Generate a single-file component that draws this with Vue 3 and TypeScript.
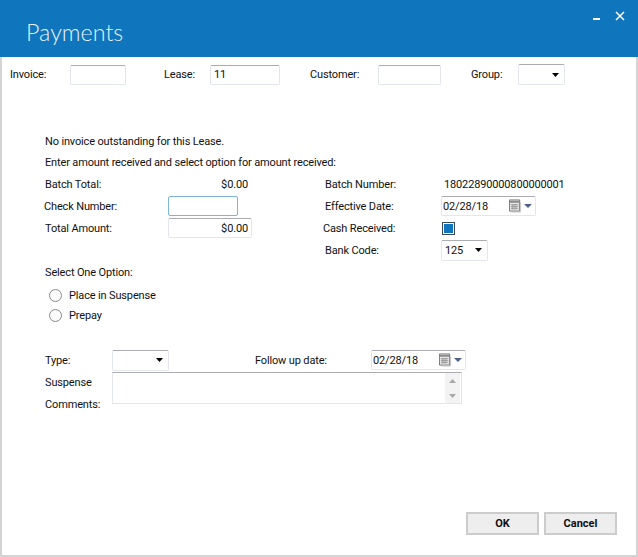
<script setup lang="ts">
import { ref } from 'vue'

const invoice = ref('')
const lease = ref('11')
const customer = ref('')
const checkNumber = ref('')
const totalAmount = ref('$0.00')
const effectiveDate = ref('02/28/18')
const followUpDate = ref('02/28/18')
const comments = ref('')
const option = ref('')
const cashReceived = ref(true)
</script>

<template>
  <div class="window">
    <header class="header">
      <h1 class="title">Payments</h1>
      <div class="window-buttons">
        <span class="minimize" />
        <svg width="10" height="10" viewBox="0 0 10 10">
          <path d="M1 1 9 9M9 1 1 9" stroke="#fff" stroke-width="1.5" fill="none" />
        </svg>
      </div>
    </header>

    <main class="body">
      <div class="search-bar">
        <label class="lbl w-invoice">Invoice:</label>
        <input v-model="invoice" class="field w56" />
        <label class="lbl w-lease">Lease:</label>
        <input v-model="lease" class="field w70" />
        <label class="lbl w-customer">Customer:</label>
        <input v-model="customer" class="field w63" />
        <label class="lbl w-group">Group:</label>
        <div class="field combo w47">
          <span />
          <svg class="caret" width="7" height="4" viewBox="0 0 7 4"><path d="M0 0h7L3.5 4z" fill="#000" /></svg>
        </div>
      </div>

      <p class="message first">No invoice outstanding for this Lease.</p>
      <p class="message">Enter amount received and select option for amount received:</p>

      <div class="form-grid">
        <span>Batch Total:</span>
        <span class="amount">$0.00</span>
        <span class="right-label">Batch Number:</span>
        <span class="batch-no">18022890000800000001</span>

        <span class="nudge">Check Number:</span>
        <input v-model="checkNumber" class="field focused w70" />
        <span class="right-label">Effective Date:</span>
        <div class="field date">
          <input v-model="effectiveDate" class="date-input" />
          <svg width="13" height="14" viewBox="0 0 14 14">
            <path d="M.5 .5h11v12H.5z" fill="#e8e8e8" stroke="#6f6f6f" />
            <path d="M1 2.500h10" stroke="#8a8a8a" stroke-width="2" />
            <path d="M2 5.500h8M2 7.500h8M2 9.500h8M3.500 5v6M5.500 5v6M7.500 5v6" stroke="#8f8f8f" stroke-width=".8" />
            <path d="M12.500 3v10.500H3" stroke="#c4c4c4" fill="none" />
          </svg>
          <svg class="date-caret" width="8" height="4" viewBox="0 0 8 4"><path d="M0 0h8L4 4z" fill="#4d6185" /></svg>
        </div>

        <span>Total Amount:</span>
        <input v-model="totalAmount" class="field total" />
        <span class="right-label nudge">Cash Received:</span>
        <label class="check">
          <input v-model="cashReceived" type="checkbox" />
          <span class="check-box" />
        </label>

        <span class="empty-cell" />
        <span class="right-label">Bank Code:</span>
        <div class="field combo w47">
          <span>125</span>
          <svg class="caret" width="7" height="4" viewBox="0 0 7 4"><path d="M0 0h7L3.5 4z" fill="#000" /></svg>
        </div>
      </div>

      <div class="option-title">Select One Option:</div>
      <label class="radio">
        <input v-model="option" type="radio" value="suspense" />
        <span class="radio-dot" />
        Place in Suspense
      </label>
      <label class="radio">
        <input v-model="option" type="radio" value="prepay" />
        <span class="radio-dot" />
        Prepay
      </label>

      <div class="type-row">
        <span class="type-label">Type:</span>
        <div class="field combo type-combo">
          <span />
          <svg class="caret" width="7" height="4" viewBox="0 0 7 4"><path d="M0 0h7L3.5 4z" fill="#000" /></svg>
        </div>
        <span class="follow-label">Follow up date:</span>
        <div class="field date">
          <input v-model="followUpDate" class="date-input" />
          <svg width="13" height="14" viewBox="0 0 14 14">
            <path d="M.5 .5h11v12H.5z" fill="#e8e8e8" stroke="#6f6f6f" />
            <path d="M1 2.500h10" stroke="#8a8a8a" stroke-width="2" />
            <path d="M2 5.500h8M2 7.500h8M2 9.500h8M3.500 5v6M5.500 5v6M7.500 5v6" stroke="#8f8f8f" stroke-width=".8" />
            <path d="M12.500 3v10.500H3" stroke="#c4c4c4" fill="none" />
          </svg>
          <svg class="date-caret" width="8" height="4" viewBox="0 0 8 4"><path d="M0 0h8L4 4z" fill="#4d6185" /></svg>
        </div>
      </div>

      <div class="comments-row">
        <div class="comments-labels">
          <span>Suspense</span>
          <span>Comments:</span>
        </div>
        <div class="comments-box">
          <textarea v-model="comments" class="comments-input" />
          <div class="scroll">
            <svg width="7" height="4" viewBox="0 0 7 4"><path d="M0 4 3.500 0 7 4z" fill="#a9a9a9" /></svg>
            <svg width="7" height="4" viewBox="0 0 7 4"><path d="M0 0 3.500 4 7 0z" fill="#a9a9a9" /></svg>
          </div>
        </div>
      </div>

      <footer class="actions">
        <button class="btn" type="button">OK</button>
        <button class="btn" type="button">Cancel</button>
      </footer>
    </main>
  </div>
</template>

<style>
html, body {
  margin: 0;
  background: #fff;
}
</style>

<style scoped>
.window {
  width: 638px;
  height: 557px;
  display: flex;
  flex-direction: column;
  font-family: "Roboto", "Liberation Sans", sans-serif;
  font-size: 11px;
  letter-spacing: -0.15px;
  color: #111;
}
.header {
  height: 57px;
  flex: none;
  background: #0f75bd;
  display: flex;
  justify-content: space-between;
}
.title {
  margin: 16px 0 0 26px;
  font-family: "Lato", "Liberation Sans", sans-serif;
  font-size: 23.3px;
  line-height: 32px;
  font-weight: 300;
  letter-spacing: 0;
  color: #e6f2fa;
}
.window-buttons {
  display: flex;
  align-items: flex-start;
  gap: 15px;
  padding: 11px 13px 0 0;
}
.minimize {
  width: 7px;
  height: 2px;
  margin-top: 7px;
  background: #fff;
}
.body {
  flex: 1;
  display: flex;
  flex-direction: column;
  border: 2px solid #d4d4d4;
  border-top: 0;
  padding: 0 19px 20px 0;
  min-height: 0;
}
.search-bar {
  display: flex;
  align-items: center;
  height: 21px;
  margin-top: 7px;
  padding-left: 8px;
}
.lbl {
  flex: none;
}
.w-invoice { width: 60px; }
.w-lease { width: 46px; margin-left: 38px; }
.w-customer { width: 68px; margin-left: 30px; }
.w-group { width: 47px; margin-left: 30px; }
.field {
  box-sizing: border-box;
  height: 20px;
  border: 1px solid #e3e6ec;
  border-top-color: #abadb3;
  border-radius: 2px;
  background: #fff;
  font: inherit;
  letter-spacing: inherit;
  color: #111;
  padding: 0 3px;
  outline: none;
  flex: none;
}
.w56 { width: 56px; }
.w63 { width: 63px; }
.w70 { width: 70px; }
.w47 { width: 47px; }
.combo {
  display: flex;
  align-items: center;
  justify-content: space-between;
  padding: 0 5px 0 3px;
  height: 21px;
}
.caret {
  flex: none;
}
.message {
  margin: 0;
  height: 21px;
  line-height: 21px;
  padding-left: 43px;
}
.message.first {
  margin-top: 46px;
}
.form-grid {
  display: grid;
  grid-template-columns: 123px 84px 73px 116px 1fr;
  grid-auto-rows: 22px;
  align-items: center;
  padding-left: 43px;
}
.amount {
  text-align: right;
  padding-right: 4px;
}
.right-label {
  grid-column: 4;
}
.empty-cell {
  grid-column: 1 / 4;
}
.nudge {
  margin-left: -1px;
}
.right-label.nudge {
  margin-left: -2px;
}
.batch-no {
  padding-left: 3px;
}
.focused {
  border-color: #7eb4d6;
}
.total {
  width: 84px;
  text-align: right;
}
.date {
  width: 95px;
  display: flex;
  align-items: center;
  padding: 0 3px 0 1px;
}
.date-input {
  flex: 1;
  min-width: 0;
  border: 0;
  outline: none;
  padding: 0;
  font: inherit;
  letter-spacing: inherit;
  color: #111;
}
.date-caret {
  margin-left: 2px;
}
.check {
  display: block;
  width: 13px;
  height: 13px;
  margin-left: 1px;
}
.check input {
  display: none;
}
.check-box {
  display: block;
  box-sizing: border-box;
  width: 13px;
  height: 13px;
  border: 1px solid #3b4a58;
  outline: 1px solid #fff;
  outline-offset: -2px;
  background: #0f75bd;
}
.option-title {
  height: 22px;
  line-height: 24px;
  padding-left: 43px;
}
.radio {
  display: flex;
  align-items: center;
  gap: 7px;
  height: 20px;
  padding-left: 47px;
}
.option-title + .radio {
  margin-top: 2px;
}
.radio input {
  display: none;
}
.radio-dot {
  box-sizing: border-box;
  width: 13px;
  height: 13px;
  border: 1px solid #8a8a8a;
  border-radius: 50%;
  background: #fbfbfb;
}
.type-row {
  display: flex;
  align-items: center;
  height: 22px;
  margin-top: 24px;
  padding-left: 43px;
}
.type-label {
  width: 67px;
}
.type-combo {
  width: 57px;
}
.follow-label {
  width: 116px;
  margin-left: 86px;
}
.comments-row {
  display: flex;
  padding-left: 43px;
}
.comments-labels {
  width: 67px;
  display: flex;
  flex-direction: column;
}
.comments-labels span {
  height: 22px;
  line-height: 24px;
}
.comments-box {
  box-sizing: border-box;
  width: 350px;
  height: 32px;
  margin-top: 1px;
  display: flex;
  border: 1px solid #e3e6ec;
  border-top-color: #abadb3;
}
.comments-input {
  flex: 1;
  border: 0;
  padding: 2px;
  resize: none;
  outline: none;
  font: inherit;
}
.scroll {
  width: 15px;
  margin-right: 1px;
  background: #f3f3f3;
  display: flex;
  flex-direction: column;
  align-items: center;
  justify-content: space-around;
}
.actions {
  margin-top: auto;
  display: flex;
  justify-content: flex-end;
  gap: 5px;
}
.btn {
  box-sizing: border-box;
  width: 73px;
  height: 23px;
  border: 2px solid #cccccc;
  background: #eeeeee;
  font: inherit;
  font-weight: 700;
  letter-spacing: 0;
  color: #111;
  padding: 0;
}
</style>
